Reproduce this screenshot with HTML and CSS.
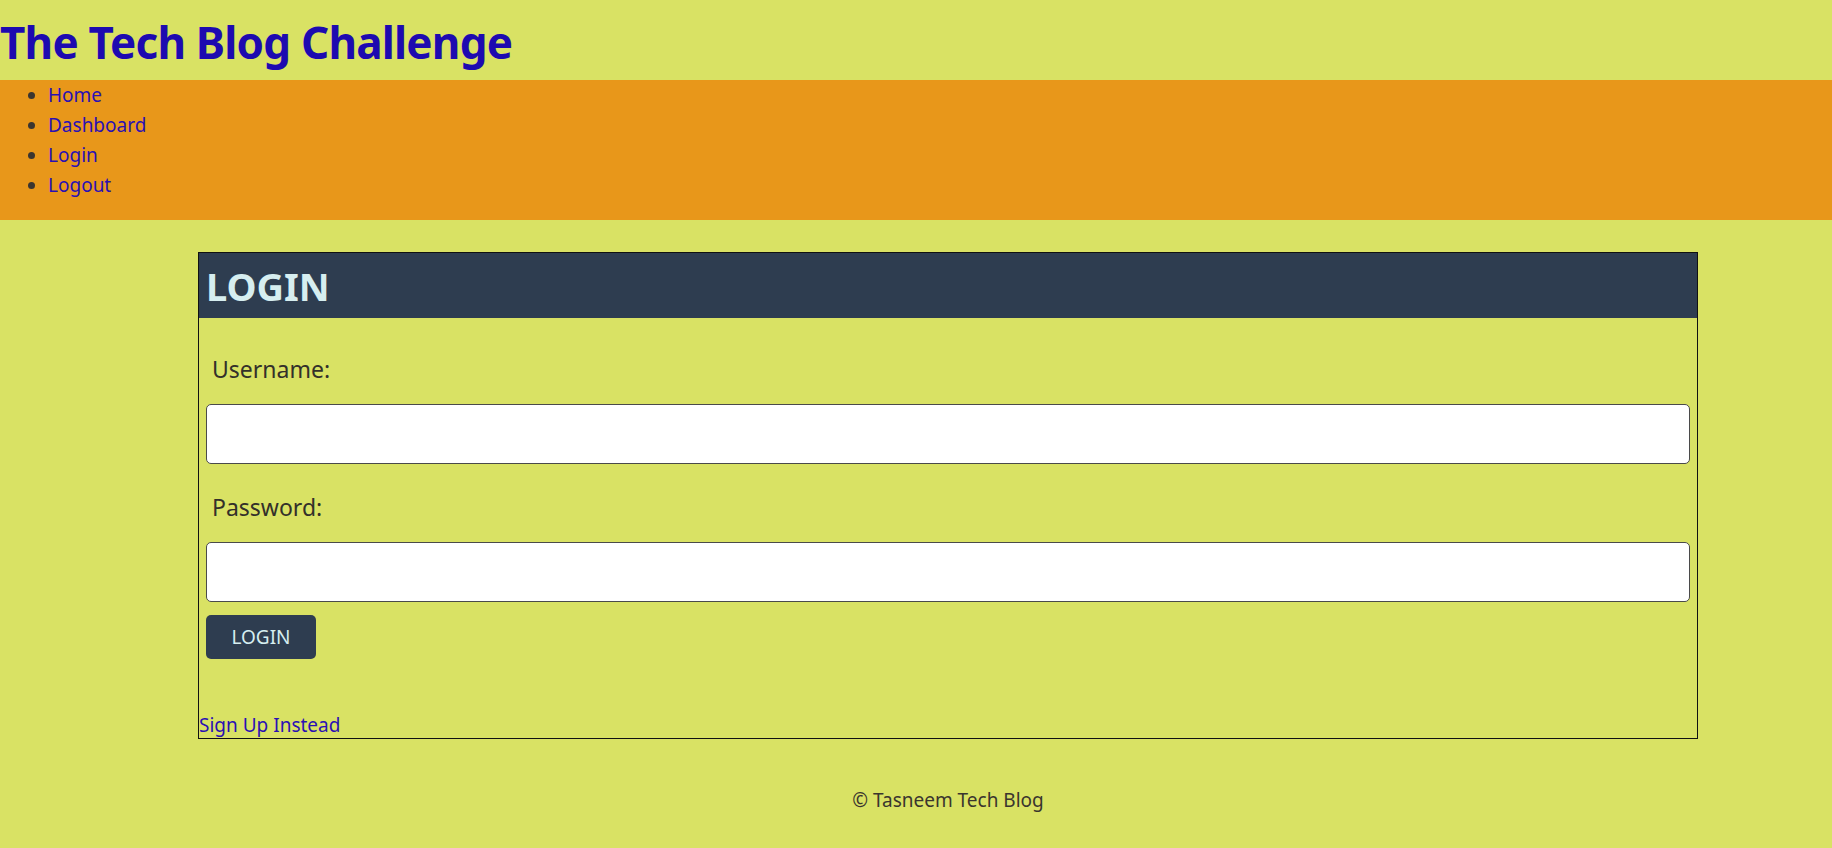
FILE: index.html
```html
<!DOCTYPE html>
<html lang="en">
<head>
<meta charset="utf-8">
<title>The Tech Blog Challenge</title>
<link rel="stylesheet" href="styles.css">
</head>
<body>
<header class="site-header">
  <h1 class="site-title">The Tech Blog Challenge</h1>
</header>
<nav class="site-nav">
  <ul class="nav-list">
    <li><a href="#">Home</a></li>
    <li><a href="#">Dashboard</a></li>
    <li><a href="#">Login</a></li>
    <li><a href="#">Logout</a></li>
  </ul>
</nav>
<main class="content">
  <section class="card">
    <div class="card-header"><h2 class="card-title">LOGIN</h2></div>
    <form class="login-form">
      <label class="field-label" for="username">Username:</label>
      <input class="field-input" id="username" type="text">
      <label class="field-label" for="password">Password:</label>
      <input class="field-input field-input-last" id="password" type="password">
      <button class="btn" type="button">LOGIN</button>
    </form>
    <a class="signup-link" href="#">Sign Up Instead</a>
  </section>
  <footer class="site-footer">© Tasneem Tech Blog</footer>
</main>
</body>
</html>
```

FILE: styles.css
```css
* { box-sizing: border-box; }

body {
  margin: 0;
  background: #d9e264;
  font-family: "Noto Sans", "Open Sans", sans-serif;
  color: #33302a;
}

a { color: #2a10b4; text-decoration: none; }

.site-header {
  height: 80px;
}

.site-title {
  margin: 0;
  font-size: 44px;
  line-height: 84px;
  font-weight: 700;
  color: #1d0ab0;
  letter-spacing: -0.8px;
}

.site-nav {
  background: #e8971a;
  height: 140px;
}

.nav-list {
  margin: 0;
  padding: 0 0 0 48px;
  font-size: 19px;
  line-height: 30px;
}

.nav-list li::marker { color: #3a3530; }

.content {
  margin: 32px 134px 0 198px;
}

.card {
  border: 1px solid #111;
  display: flex;
  flex-direction: column;
}

.card-header {
  background: #2e3d50;
  height: 65px;
  display: flex;
  align-items: center;
  padding-left: 7px;
}

.card-title {
  margin: 0;
  font-size: 38px;
  font-weight: 700;
  color: #d6eef0;
  line-height: 1;
}

.login-form {
  display: flex;
  flex-direction: column;
  align-items: flex-start;
  padding: 36px 7px 0 7px;
}

.field-label {
  font-size: 23px;
  line-height: 30px;
  padding-left: 6px;
  margin-bottom: 20px;
  color: #33302a;
}

.field-input {
  width: 100%;
  height: 60px;
  border: 1px solid #4a4a4a;
  border-radius: 5px;
  background: #fff;
  margin-bottom: 28px;
}

.field-input-last { margin-bottom: 13px; }

.btn {
  width: 110px;
  height: 44px;
  background: #2e3d50;
  color: #d6eef0;
  border: none;
  border-radius: 5px;
  font-family: inherit;
  font-size: 19px;
}

.signup-link {
  margin-top: 53px;
  font-size: 19px;
  line-height: 26px;
}

.site-footer {
  text-align: center;
  font-size: 19px;
  line-height: 26px;
  margin-top: 48px;
  color: #3a352e;
}
```
